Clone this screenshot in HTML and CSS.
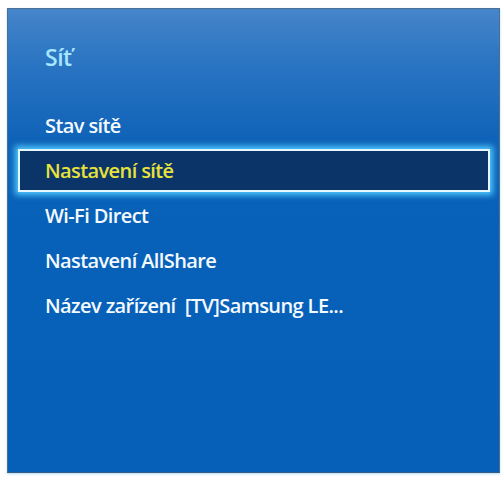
FILE: index.html
```html
<!DOCTYPE html>
<html lang="cs">
<head>
<meta charset="utf-8">
<title>Síť</title>
<link rel="stylesheet" href="styles.css">
</head>
<body>
<div class="panel">
  <h1 class="title">Síť</h1>
  <ul class="menu">
    <li class="item">Stav sítě</li>
    <li class="item selected">Nastavení sítě</li>
    <li class="item">Wi-Fi Direct</li>
    <li class="item">Nastavení AllShare</li>
    <li class="item">Název zařízení&nbsp; [TV]Samsung LE...</li>
  </ul>
</div>
</body>
</html>
```
FILE: styles.css
```css
html, body {
  margin: 0;
  padding: 0;
  background: #ffffff;
}
body {
  width: 504px;
  height: 478px;
  overflow: hidden;
  font-family: "Open Sans", "Noto Sans", "DejaVu Sans", sans-serif;
}
.panel {
  margin: 8px 4px 0 7px;
  width: 491px;
  height: 463px;
  border: 1px solid #4d6f96;
  border-bottom-color: #3a5a80;
  background: linear-gradient(to bottom, #4585ca 0%, #2a74c2 12%, #0f63b8 28%, #0861b8 45%, #0760b8 100%);
  box-shadow: 0 1px 2px rgba(120, 200, 240, 0.6);
}
.title {
  margin: 0;
  padding: 35px 0 0 37px;
  height: 56px;
  box-sizing: border-box;
  font-size: 23px;
  font-weight: 600;
  color: #a6e6ff;
  line-height: 26px;
  letter-spacing: -0.5px;
}
.menu {
  list-style: none;
  margin: 0;
  padding: 39px 9px 0 10px;
  display: flex;
  flex-direction: column;
  gap: 2px;
}
.item {
  height: 43px;
  box-sizing: border-box;
  padding-left: 27px;
  display: flex;
  align-items: center;
  font-size: 20px;
  font-weight: 600;
  color: #f4faff;
  letter-spacing: -0.6px;
}
.item.selected {
  background: #0b3568;
  border: 2px solid #e6f8ff;
  padding-left: 25px;
  color: #e9e23c;
  box-shadow: 0 0 6px 3px #4fc8ff;
}
```
